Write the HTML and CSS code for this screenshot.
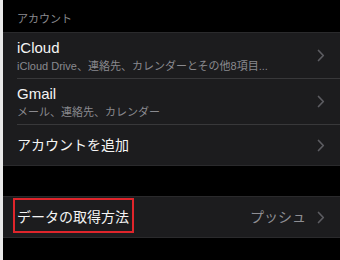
FILE: index.html
```html
<!DOCTYPE html>
<html lang="ja">
<head>
<meta charset="utf-8">
<link rel="stylesheet" href="styles.css">
</head>
<body>
<div class="screen">
  <div class="strip"></div>
  <div class="main">
    <div class="section-header">アカウント</div>
    <div class="group">
      <div class="cell tall">
        <div class="texts">
          <div class="title">iCloud</div>
          <div class="sub">iCloud Drive、連絡先、カレンダーとその他8項目...</div>
        </div>
        <svg class="chev" width="8" height="13" viewBox="0 0 8 13"><path d="M1.5 1.5 L6.3 6.5 L1.5 11.5" fill="none" stroke="#5c5c61" stroke-width="1.7" stroke-linecap="round" stroke-linejoin="round"/></svg>
      </div>
      <div class="cell tall">
        <div class="texts">
          <div class="title">Gmail</div>
          <div class="sub">メール、連絡先、カレンダー</div>
        </div>
        <svg class="chev" width="8" height="13" viewBox="0 0 8 13"><path d="M1.5 1.5 L6.3 6.5 L1.5 11.5" fill="none" stroke="#5c5c61" stroke-width="1.7" stroke-linecap="round" stroke-linejoin="round"/></svg>
      </div>
      <div class="cell last">
        <div class="title jp">アカウントを追加</div>
        <svg class="chev" width="8" height="13" viewBox="0 0 8 13"><path d="M1.5 1.5 L6.3 6.5 L1.5 11.5" fill="none" stroke="#5c5c61" stroke-width="1.7" stroke-linecap="round" stroke-linejoin="round"/></svg>
      </div>
    </div>
    <div class="spacer"></div>
    <div class="group">
      <div class="cell last">
        <div class="title jp">データの取得方法</div>
        <div class="value">プッシュ</div>
        <svg class="chev" width="8" height="13" viewBox="0 0 8 13"><path d="M1.5 1.5 L6.3 6.5 L1.5 11.5" fill="none" stroke="#5c5c61" stroke-width="1.7" stroke-linecap="round" stroke-linejoin="round"/></svg>
        <div class="highlight"></div>
      </div>
    </div>
  </div>
</div>
</body>
</html>
```
FILE: styles.css
```css
html, body {
  margin: 0;
  padding: 0;
  background: #000;
}
body {
  width: 340px;
  height: 260px;
  overflow: hidden;
  font-family: "Liberation Sans", "Noto Sans CJK JP", sans-serif;
  color: #f2f2f2;
}
.screen {
  display: flex;
  height: 260px;
}
.strip {
  width: 3px;
  flex: none;
  background: #e9e9e9;
}
.main {
  flex: 1;
  background: #000;
  display: flex;
  flex-direction: column;
}
.section-header {
  height: 32px;
  box-sizing: border-box;
  padding: 12px 0 0 14px;
  font-size: 11px;
  line-height: 14px;
  color: #8a8a8f;
}
.group {
  background: #1c1c1e;
  border-top: 1px solid #2a2a2c;
  border-bottom: 1px solid #2a2a2c;
}
.cell {
  position: relative;
  display: flex;
  align-items: center;
  height: 45px;
  margin-left: 14px;
  padding-right: 15px;
  border-bottom: 1px solid #38383a;
}
.cell.last {
  border-bottom: none;
  height: 40px;
}
.texts {
  flex: 1;
  display: flex;
  flex-direction: column;
  gap: 2px;
  padding-top: 1px;
}
.cell > .title {
  flex: 1;
}
.title {
  font-size: 15px;
  line-height: 18px;
  color: #f4f4f4;
}
.title.jp {
  font-size: 14px;
}
.sub {
  font-size: 11px;
  line-height: 14px;
  color: #8a8a8f;
  white-space: nowrap;
}
.value {
  font-size: 14px;
  line-height: 18px;
  color: #8e8e93;
  margin-right: 11px;
}
.chev {
  flex: none;
  display: block;
}
.spacer {
  height: 30px;
}
.highlight {
  position: absolute;
  left: -4px;
  top: 1px;
  width: 121px;
  height: 35px;
  box-sizing: border-box;
  border: 2px solid #e0252b;
}
```
